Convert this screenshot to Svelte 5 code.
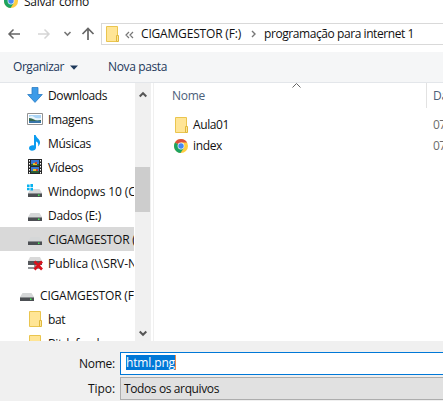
<script>
  const places = [
    { icon: 'down', label: 'Downloads', fit: 59 },
    { icon: 'image', label: 'Imagens', fit: 45 },
    { icon: 'music', label: 'Músicas', fit: 43 },
    { icon: 'video', label: 'Vídeos', fit: 35 },
    { icon: 'windrive', label: 'Windopws 10 (C:)', fit: 94 },
    { icon: 'drive', label: 'Dados (E:)', fit: 53 },
    { icon: 'drive', label: 'CIGAMGESTOR (F:)', fit: 100, selected: true },
    { icon: 'netdrive', label: 'Publica (\\\\SRV-NT)', fit: 99 },
    { icon: 'drive', label: 'CIGAMGESTOR (F:)', fit: 100, root: true },
    { icon: 'folder', label: 'bat', fit: 17 },
    { icon: 'folder', label: 'Bitdefender', fit: 62 }
  ];
  const files = [
    { icon: 'folder', label: 'Aula01', fit: 36, date: '07/03/2018' },
    { icon: 'chrome', label: 'index', fit: 29, date: '07/03/2018' }
  ];

  // Tightens or loosens tracking so that a label takes the given width.
  function fitWidth(node, width) {
    if (!width) return;
    const apply = () => {
      node.style.letterSpacing = '0px';
      const natural = node.getBoundingClientRect().width;
      node.style.letterSpacing = (width - natural) / node.textContent.length + 'px';
    };
    apply();
    document.fonts?.ready.then(apply);
  }
</script>

{#snippet text(label, width)}<span class="t" use:fitWidth={width}>{label}</span>{/snippet}

{#snippet icon(name)}
  <svg class="icon" width="16" height="16" viewBox="0 0 16 16">
    {#if name === 'down'}
      <path d="M5 .5h6v7h4.3L8 15.4.7 7.500H5z" fill="#3c9be8" stroke="#2b7cc4" stroke-width=".8" />
    {:else if name === 'image'}
      <path d="M.5 2.500h15v11H.5z" fill="#fff" stroke="#929292" />
      <path d="M2 4h12v8H2z" fill="#a9d3f5" />
      <path d="M2 6q3-2 5 0t7 1v2H2z" fill="#e9f5fb" />
      <path d="M2 7q3 0 5 1.500t7 .5v1H2z" fill="#35684f" />
      <path d="M2 10h12v2H2z" fill="#3975a8" />
    {:else if name === 'music'}
      <path d="M7 0h1.700c.4 3 4.800 4 4.300 8-.2 1.500-1 2.500-2 3.500.6-2.700.2-4-2-5v6.200C9 16 2 17 2 13.200 2 10.700 5 10 7 10.500z" fill="#0c9cf0" />
    {:else if name === 'video'}
      <path d="M1 0h14v15H1z" fill="#272727" />
      <path d="M4 1h8v6H4zM4 8h8v6H4z" fill="#3976d2" />
      <path d="M4 5h8v2H4zM4 12h8v2H4z" fill="#285d37" />
      <path d="M6 4h4v2H6zM6 10h3v2H6z" fill="#e8be27" />
      <path d="M8 3h2v2H8zM9 10h2v2H9z" fill="#c9442d" />
      <path d="M2.500 1v14M13.500 1v14" stroke="#fff" stroke-dasharray="1.500 1.500" />
    {:else if name === 'folder'}
      <path d="M2.500.5h11v15h-11z" fill="#ffe596" stroke="#eac54f" />
      <path d="M12.500 9.500h2v6h-2z" fill="#ffe596" stroke="#dfb83d" />
    {:else if name === 'chrome'}
      <circle cx="8" cy="8" r="7" fill="#ffcd40" />
      <path d="M8 8 1.940 4.500A7 7 0 0 1 14.100 4.600H8z" fill="#dd4f3e" />
      <path d="M8 8 1.940 4.500A7 7 0 0 0 7.500 15L11 9.800z" fill="#1da362" />
      <circle cx="8" cy="8" r="3.400" fill="#f4f7f5" />
      <circle cx="8" cy="8" r="2.700" fill="#4587f3" />
    {:else}
      {#if name === 'netdrive'}
        <path d="M3 2h10l2 4H1z" fill="#d9d9d9" />
        <path d="M1 6h14v4H1z" fill="#55585c" />
        <path d="M7 10h2v2H7zM1 12h13v2H1z" fill="#929699" />
        <path d="m7.500 6.500 7.500 8M15 6.500l-7.500 8" stroke="#d9141e" stroke-width="2.600" />
      {:else}
        <path d="M3.500 6h9L15 10H1z" fill="#d5d7d8" />
        <path d="M1 10h14v4H1z" fill="#4c4f53" />
        <path d="M1 10.500h14" stroke="#8a8d90" />
        <path d="M11 11.500h1.500V13H11z" fill="#42ed57" />
        {#if name === 'windrive'}
          <path d="M0 1h6v6H0z" fill="#fff" />
          <path d="M0 1.400h2.600V4H0zM3.400 1H6v3H3.400zM0 4.800h2.600v2.400H0zM3.400 4.800H6v2.700H3.400z" fill="#08b2ef" />
        {/if}
      {/if}
    {/if}
  </svg>
{/snippet}

<div class="dialog">
  <header class="title">{@render icon('chrome')}{@render text('Salvar como', 65)}</header>

  <nav>
    <svg class="arrows" width="101" height="22" viewBox="0 0 101 22" fill="none">
      <path d="M20 11H9M13.500 6.500 9 11l4.500 4.500" stroke="#666" stroke-width="1.500" />
      <path d="M38 11h11M44.500 6.500 49 11l-4.500 4.500" stroke="#d5d5d5" stroke-width="1.500" />
      <path d="m64.500 9 3 3 3-3" stroke="#777" stroke-width="1.600" />
      <path d="M88 17V6M82.500 11 88 5.500l5.500 5.500" stroke="#666" stroke-width="1.700" />
    </svg>
    <div class="address">
      {@render icon('folder')}
      <svg class="back" width="9" height="8" viewBox="0 0 9 8" fill="none" stroke="#777" stroke-width="1.200"><path d="M4 1 1 4l3 3M8 1 5 4l3 3" /></svg>
      {@render text('CIGAMGESTOR (F:)', 100)}
      <svg class="sep" width="5" height="8" viewBox="0 0 5 8" fill="none" stroke="#777" stroke-width="1.400"><path d="m1 1 3 3-3 3" /></svg>
      {@render text('programação para internet 1', 150)}
    </div>
  </nav>

  <div class="toolbar">
    {@render text('Organizar', 51)}
    <svg width="8" height="5" viewBox="0 0 8 5"><path d="M0 .5h8L4 4.800z" fill="#1e395b" /></svg>
    <div class="new">{@render text('Nova pasta', 59)}</div>
  </div>

  <main>
    <aside>
      {#each places as p}
        <div class="place" class:selected={p.selected} class:root={p.root}>
          {@render icon(p.icon)}{@render text(p.label, p.fit)}
        </div>
      {/each}
    </aside>
    <div class="scroll">
      <svg width="8" height="7" viewBox="0 0 8 7" fill="none" stroke="#555" stroke-width="2"><path d="m.7 5.500 3.300-3.300 3.300 3.300" /></svg>
      <div class="thumb"></div>
      <svg width="8" height="7" viewBox="0 0 8 7" fill="none" stroke="#555" stroke-width="2"><path d="m.7 1.500 3.300 3.300 3.300-3.300" /></svg>
    </div>
    <section>
      <div class="columns">
        <div class="name">{@render text('Nome', 33)}
          <svg width="9" height="5" viewBox="0 0 9 5" fill="none" stroke="#666"><path d="M.5 4.500l4-4 4 4" /></svg>
        </div>
        <div class="date">{@render text('Data', 25)}</div>
      </div>
      {#each files as f}
        <div class="file">
          <div class="fname">{@render icon(f.icon)}{@render text(f.label, f.fit)}</div>
          <div class="fdate">{@render text(f.date, 58)}</div>
        </div>
      {/each}
    </section>
  </main>

  <footer>
    <div class="field"><label for="filename">{@render text('Nome:', 36)}</label>
      <div class="input" id="filename"><mark>{@render text('html.png', 49)}</mark></div>
    </div>
    <div class="field"><label for="filetype">{@render text('Tipo:', 27)}</label>
      <div class="select" id="filetype">{@render text('Todos os arquivos', 95)}</div>
    </div>
  </footer>
</div>

<style>
  :global(body) { margin: 0; overflow: hidden; }
  .dialog {
    width: 443px; height: 401px; overflow: hidden; background: #fff; color: #111;
    font: 12px/16px "Open Sans", "Noto Sans", sans-serif;
    display: flex; flex-direction: column; white-space: nowrap;
  }
  .dialog * { box-sizing: border-box; }
  svg { display: block; flex: none; }
  .t { display: inline-block; flex: none; }
  .title { height: 23px; flex: none; display: flex; align-items: flex-start; gap: 5px; padding-left: 3px; }
  .title .t { margin-top: -6px; }
  .title .icon { margin-top: -7px; }
  nav { height: 29px; flex: none; display: flex; align-items: flex-start; }
  .address {
    flex: 1; height: 22px; border: 1px solid #d9d9d9; border-right: 0;
    display: flex; align-items: center; padding-left: 2px;
  }
  .back { margin: 1px 7px 0 5px; }
  .sep { margin: 0 8px 0 10px; }
  .toolbar {
    height: 31px; flex: none; display: flex; align-items: center; padding-left: 13px;
    background: #f5f6f7; border-bottom: 1px solid #e3e6ea; color: #1e395b;
  }
  .toolbar svg { margin-left: 6px; }
  .new { margin-left: 30px; }
  main { height: 258px; flex: none; display: flex; }
  aside { width: 134px; overflow: hidden; }
  .place { height: 24px; padding-left: 27px; display: flex; align-items: center; gap: 5px; }
  .place .t { padding-top: 1px; }
  .root { margin-top: 8px; padding-left: 19px; }
  .selected { background: #d9d9d9; }
  .scroll {
    width: 16px; margin-left: 1px; background: #f0f0f0;
    display: flex; flex-direction: column; padding: 8px 0 4px;
  }
  .scroll svg { margin-left: 4px; }
  .thumb { width: 15px; height: 45px; margin: 69px 0 auto; background: #cdcdcd; }
  section { flex: 1; min-width: 0; margin-left: 2px; border-left: 1px solid #f0f0f0; overflow: hidden; }
  .columns { height: 31px; display: flex; color: #4c607a; }
  .name { width: 273px; flex: none; height: 25px; padding: 5px 0 0 18px; border-right: 1px solid #e2e2e2; display: flex; }
  .name svg { margin: -5px 0 0 87px; }
  .date { padding: 5px 0 0 6px; }
  .file { height: 21px; display: flex; align-items: center; }
  .fname { width: 279px; flex: none; padding-left: 19px; display: flex; align-items: center; gap: 4px; }
  .fdate { color: #6d6d6d; }
  footer { flex: 1; background: #f0f0f0; padding-top: 11px; display: flex; flex-direction: column; gap: 2px; }
  .field { height: 23px; display: flex; flex: none; align-items: center; }
  label { width: 120px; padding-right: 5px; display: flex; justify-content: flex-end; }
  .input, .select { flex: 1; height: 23px; border: 1px solid #0078d7; border-right: 0; background: #fff; display: flex; align-items: center; }
  .input { padding: 0 0 2px 5px; }
  mark { background: #0078d7; color: #fff; height: 15px; line-height: 15px; display: flex; border-right: 1px solid #e88b4c; }
  .select { background: #e1e1e1; border-color: #adadad; padding-left: 3px; }
</style>
